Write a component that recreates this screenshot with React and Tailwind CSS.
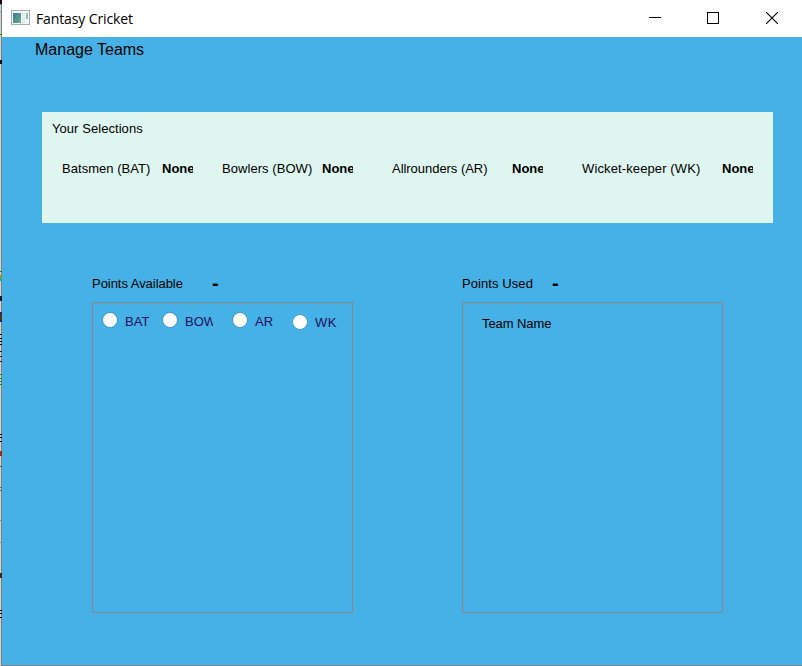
const selections = [
  { label: 'Batsmen (BAT)', box: 'w-[100px]', gap: 'mr-[29px]', track: 'tracking-[0.04px]' },
  { label: 'Bowlers (BOW)', box: 'w-[100px]', gap: 'mr-[39px]', track: 'tracking-[0.06px]' },
  { label: 'Allrounders (AR)', box: 'w-[120px]', gap: 'mr-[39px]', track: 'tracking-[-0.04px]' },
  { label: 'Wicket-keeper (WK)', box: 'w-[140px]', gap: '', track: 'tracking-[0.12px]' },
];

const roles = [
  { label: 'BAT', box: 'w-[60px]', text: 'w-[28px] mt-[2px]' },
  { label: 'BOW', box: 'w-[70px]', text: 'w-[28px] mt-[2px]' },
  { label: 'AR', box: 'w-[60px]', text: 'w-[28px] mt-[2px]' },
  { label: 'WK', box: 'w-[50px] mt-[2px]', text: 'w-[28px] mt-[1px] tracking-[0.4px]' },
];

// Fragments of the window behind: [y, height, colour]
const marks = [
  [0, 4, '#200808'], [4, 1, '#2ca0c8'], [11, 1, '#8ab060'], [34, 1, '#109010'], [60, 4, '#080808'],
  [271, 1, '#109010'], [275, 3, '#80a020'], [278, 3, '#20b0a0'],
  [296, 5, '#181830'], [312, 2, '#202080'], [314, 6, '#503010'], [320, 2, '#202080'],
  [334, 1, '#000'], [338, 1, '#000'], [341, 1, '#000'], [344, 1, '#000'],
  [351, 1, '#501020'], [356, 1, '#501020'], [361, 1, '#501020'],
  [374, 1, '#109010'], [378, 1, '#109010'], [381, 1, '#109010'], [384, 1, '#109010'],
  [434, 1, '#000'], [437, 1, '#000'], [441, 1, '#000'],
  [451, 5, '#a02810'], [466, 1, '#555'], [487, 1, '#666'], [490, 1, '#666'],
  [520, 1, '#888'], [542, 1, '#888'], [573, 5, '#482010'],
  [610, 1, '#000'], [613, 1, '#000'], [617, 1, '#000'],
];

function Role({ label, box, text }) {
  return (
    <label className={`flex shrink-0 items-start ${box}`}>
      <span className="h-4 w-4 shrink-0 rounded-full border border-[#3b9ccc] bg-white" />
      <span className={`ml-[7px] overflow-hidden whitespace-nowrap leading-4 text-[#1c1060] ${text}`}>
        {label}
      </span>
    </label>
  );
}

export default function App() {
  return (
    <div className="flex h-[666px] w-[802px] overflow-hidden bg-white font-['Liberation_Sans',Arial,sans-serif] text-[13px] text-black">
      <svg width="2" height="666" className="shrink-0" shapeRendering="crispEdges">
        <rect width="1" height="666" fill="#d2d2d2" />
        <rect x="1" width="1" height="666" fill="#7b8083" />
        {marks.map(([y, h, fill]) => (
          <rect key={y} y={y} width="2" height={h} fill={fill} />
        ))}
      </svg>

      <div className="flex w-[800px] flex-col">
        <header className="flex h-[37px] shrink-0 items-start bg-white">
          <svg width="19" height="15" viewBox="0 0 19 15" className="ml-[9px] mt-[10px]">
            <defs>
              <linearGradient id="pane" x1="0" y1="0" x2="1" y2="1">
                <stop offset="0" stopColor="#3f78a8" />
                <stop offset="1" stopColor="#62b078" />
              </linearGradient>
            </defs>
            <rect x=".5" y=".5" width="18" height="14" fill="#f4f6f8" stroke="#a6acb2" />
            <rect x="2" y="3" width="8" height="10" fill="url(#pane)" />
            <rect x="11" y="3" width="3" height="10" fill="#e3eaf2" />
            <rect x="15" y="3" width="2" height="6" fill="#8cc4ae" />
          </svg>
          <span className="ml-[6px] mt-[9px] w-[110px] whitespace-nowrap font-['Open_Sans','Noto_Sans',sans-serif] text-[14px] leading-5 tracking-[-0.12px]">
            Fantasy Cricket
          </span>
          <svg width="14" height="13" className="ml-[501px] mt-[12px]" shapeRendering="crispEdges">
            <path d="M2 5.5h12" stroke="#000" />
          </svg>
          <svg width="12" height="12" className="ml-[46px] mt-[12px]" shapeRendering="crispEdges">
            <rect x=".5" y=".5" width="11" height="11" fill="none" stroke="#000" />
          </svg>
          <svg width="12" height="12" className="ml-[47px] mt-[12px]">
            <path d="M0 0l12 12M12 0L0 12" stroke="#000" strokeWidth="1.1" />
          </svg>
        </header>

        <main className="flex h-[629px] flex-col border-b border-[#6f7f88] bg-[#46b1e6]">
          <h1 className="ml-[33px] mt-[3px] text-[16px] leading-5">Manage Teams</h1>

          <section className="ml-[40px] mt-[52px] h-[111px] w-[731px] shrink-0 bg-[#dff5ef] pl-[10px] pt-[9px]">
            <h2 className="leading-4 tracking-[0.06px]">Your Selections</h2>
            <div className="ml-[10px] mt-[24px] flex leading-4">
              {selections.map((s) => (
                <div key={s.label} className={`flex shrink-0 whitespace-nowrap ${s.gap}`}>
                  <span className={`${s.box} ${s.track}`}>{s.label}</span>
                  <b className="w-[31px] overflow-hidden font-bold">None</b>
                </div>
              ))}
            </div>
          </section>

          <div className="ml-[90px] mt-[53px] flex gap-[109px]">
            <section className="w-[261px]">
              <div className="flex leading-4">
                <span className="w-[120px] tracking-[-0.04px]">Points Available</span>
                <b className="-mt-px text-[20px] leading-4">-</b>
              </div>
              <div className="mt-[10px] flex h-[311px] items-start border border-[#8b8689] pl-[9px] pt-[9px]">
                {roles.map((r) => (
                  <Role key={r.label} {...r} />
                ))}
              </div>
            </section>
            <section className="w-[261px]">
              <div className="flex leading-4">
                <span className="w-[90px] tracking-[0.08px]">Points Used</span>
                <b className="-mt-px text-[20px] leading-4">-</b>
              </div>
              <div className="mt-[10px] h-[311px] border border-[#8b8689] pl-[19px] pt-[13px] leading-4 tracking-[-0.08px]">
                Team Name
              </div>
            </section>
          </div>
        </main>
      </div>
    </div>
  );
}
